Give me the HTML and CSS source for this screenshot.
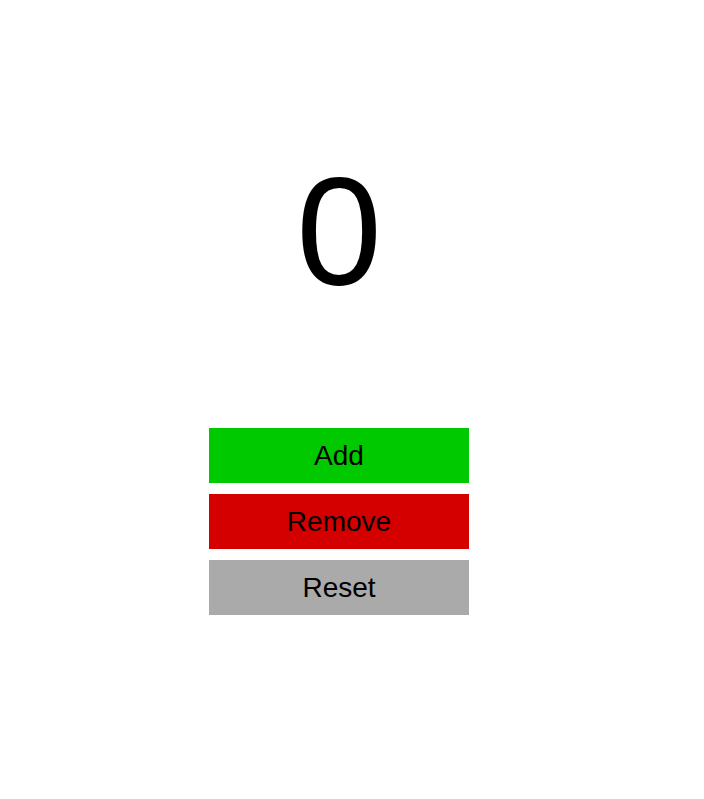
FILE: index.html
```html
<!DOCTYPE html>
<html>
<head>
<meta charset="utf-8">
<link rel="stylesheet" href="styles.css">
</head>
<body>
<div class="app">
  <div class="count">0</div>
  <div class="buttons">
    <button class="btn add">Add</button>
    <button class="btn remove">Remove</button>
    <button class="btn reset">Reset</button>
  </div>
</div>
</body>
</html>
```
FILE: styles.css
```css
html, body {
  margin: 0;
  padding: 0;
  background: #ffffff;
}
.app {
  width: 678px;
  display: flex;
  flex-direction: column;
  align-items: center;
  font-family: "Liberation Sans", Arial, sans-serif;
  padding-top: 140px;
}
.count {
  font-size: 154px;
  line-height: 184px;
  color: #000;
  height: 184px;
}
.buttons {
  margin-top: 104px;
  display: flex;
  flex-direction: column;
  gap: 11px;
}
.btn {
  width: 260px;
  height: 55px;
  border: none;
  padding: 0;
  font-family: "Liberation Sans", Arial, sans-serif;
  font-size: 28px;
  color: #000;
  cursor: pointer;
}
.add { background: #00c900; }
.remove { background: #d40000; }
.reset { background: #aaaaaa; }
```
